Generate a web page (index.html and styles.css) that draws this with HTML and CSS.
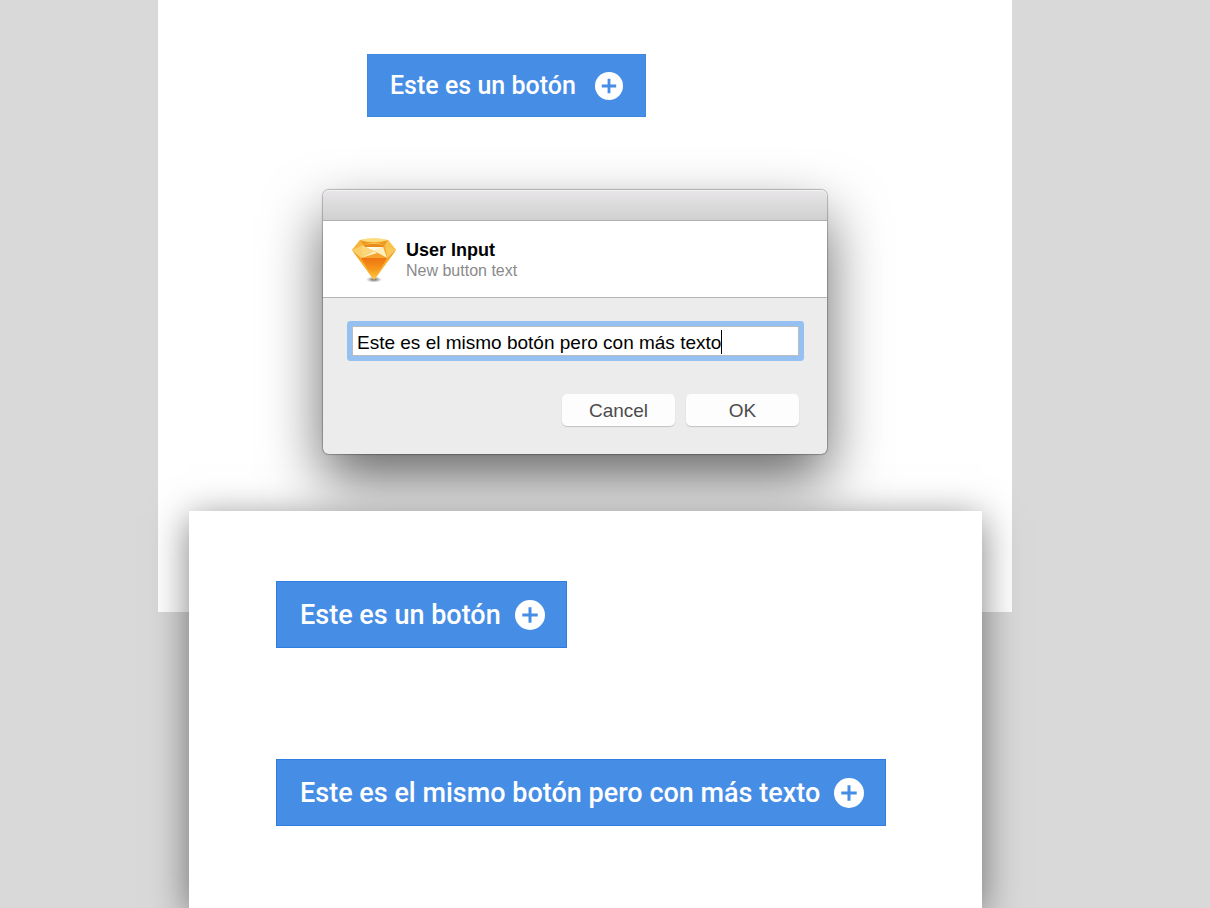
FILE: index.html
```html
<!DOCTYPE html>
<html lang="es">
<head>
<meta charset="utf-8">
<meta name="viewport" content="width=device-width, initial-scale=1">
<title>User Input</title>
<link rel="stylesheet" href="styles.css">
</head>
<body>
<main class="stage">
  <section class="artboard">
    <button class="cta" type="button">
      <span>Este es un botón</span>
      <svg class="cta-icon" viewBox="0 0 28 28" aria-hidden="true"><circle cx="14" cy="14" r="14" fill="#fff"/><path d="M14 6.800v14.400M6.800 14h14.400" stroke="#468de5" stroke-width="2.800"/></svg>
    </button>
    <form class="dialog" role="dialog" aria-labelledby="dialog-title">
      <div class="titlebar"></div>
      <header class="dialog-head">
        <svg class="logo" viewBox="0 0 46 48" aria-hidden="true">
          <defs>
            <linearGradient id="body" x1="0" y1="0" x2="0" y2="1"><stop offset="0" stop-color="#ee7410"/><stop offset=".5" stop-color="#f7961b"/><stop offset="1" stop-color="#fed045"/></linearGradient>
            <linearGradient id="side" x1="0" y1="0" x2="0" y2="1"><stop offset="0" stop-color="#f39a1e"/><stop offset="1" stop-color="#fccb45"/></linearGradient>
            <linearGradient id="top" x1="0" y1="0" x2="0" y2="1"><stop offset="0" stop-color="#fbd76a"/><stop offset=".45" stop-color="#f6a823"/><stop offset="1" stop-color="#f39a1c"/></linearGradient>
            <radialGradient id="ground"><stop offset="0" stop-color="#333" stop-opacity=".8"/><stop offset="1" stop-color="#555" stop-opacity="0"/></radialGradient>
          </defs>
          <ellipse cx="23" cy="42.500" rx="8" ry="3" fill="url(#ground)"/>
          <path d="M9 3Q23 -.5 37 3L45 13L23 43L1 13Z" fill="url(#top)"/>
          <path d="M1 13L10 21L23 43Z" fill="url(#side)"/>
          <path d="M45 13L36 21L23 43Z" fill="url(#side)"/>
          <path d="M10 21H36L23 43Z" fill="url(#body)"/>
          <path d="M1 13L12 8L10 21Z" fill="#fbcf68"/>
          <path d="M45 13L34 8L36 21Z" fill="#f9c65a"/>
          <path d="M1 13L9 3L12 8Z" fill="#f6b540"/>
          <path d="M45 13L37 3L34 8Z" fill="#f8c24d"/>
          <path d="M9 3L12 8Q23 4 34 8L37 3Q23 8 9 3Z" fill="#ee9a20"/>
          <path d="M12 8Q23 6 34 8L32 10H14Z" fill="#e98a18"/>
          <path d="M12 8L14 10L10 21Z" fill="#fbdd8c"/>
          <path d="M34 8L32 10L36 21Z" fill="#f6a830"/>
          <path d="M14 10H32L23 14Z" fill="#fffae5"/>
          <path d="M14 10L23 14L10 21Z" fill="#fbd77c"/>
          <path d="M32 10L23 14L36 21Z" fill="#fff0c0"/>
          <path d="M10 21L23 14L36 21Z" fill="#f7a42e"/>
          <path d="M10 21L23 14L26 16Z" fill="#fff0c4"/>
          <path d="M9 3Q23 -.5 37 3L23 5Z" fill="#fcdc80"/>
        </svg>
        <div>
          <h1 class="dialog-title" id="dialog-title">User Input</h1>
          <label class="dialog-label" for="button-text">New button text</label>
        </div>
      </header>
      <div class="dialog-body">
        <div class="field">
          <input class="field-input" id="button-text" type="text" value="Este es el mismo botón pero con más texto">
          <span class="caret"></span>
        </div>
        <div class="actions">
          <button class="action" type="button">Cancel</button>
          <button class="action" type="submit">OK</button>
        </div>
      </div>
    </form>
  </section>
  <section class="result">
    <button class="cta cta-large" type="button">
      <span>Este es un botón</span>
      <svg class="cta-icon" viewBox="0 0 28 28" aria-hidden="true"><circle cx="14" cy="14" r="14" fill="#fff"/><path d="M14 6.800v14.400M6.800 14h14.400" stroke="#468de5" stroke-width="2.800"/></svg>
    </button>
    <button class="cta cta-large" type="button">
      <span>Este es el mismo botón pero con más texto</span>
      <svg class="cta-icon" viewBox="0 0 28 28" aria-hidden="true"><circle cx="14" cy="14" r="14" fill="#fff"/><path d="M14 6.800v14.400M6.800 14h14.400" stroke="#468de5" stroke-width="2.800"/></svg>
    </button>
  </section>
</main>
</body>
</html>
```
FILE: styles.css
```css
* {
  box-sizing: border-box;
}

body {
  margin: 0;
  background: #d9d9d9;
  font-family: "Liberation Sans", Arial, sans-serif;
}

.stage {
  display: flex;
  flex-direction: column;
  min-height: 100vh;
  padding: 0 198px 0 158px;
  overflow: hidden;
}

.artboard {
  padding: 54px 185px 158px 165px;
  background: #fff;
}

.cta {
  display: flex;
  align-items: center;
  gap: 19px;
  height: 63px;
  padding: 0 22px;
  border: 1px solid #3f87e1;
  background: #468de5;
  color: #fff;
  font: 500 25px/32px Roboto, sans-serif;
  white-space: nowrap;
}

.artboard .cta {
  margin-left: 44px;
}

.cta-icon {
  flex: none;
  width: 28px;
  height: 28px;
}

.cta-large {
  gap: 14px;
  height: 67px;
  padding: 0 21px 0 23px;
  border-color: #2f7de0;
  font-size: 27px;
}

.cta-large .cta-icon {
  width: 30px;
  height: 30px;
}

.dialog {
  margin-top: 73px;
  border-radius: 6px;
  background: #ececec;
  box-shadow: 0 0 1px 1px rgba(0, 0, 0, 0.25), 0 26px 58px rgba(0, 0, 0, 0.6);
}

.titlebar {
  height: 31px;
  border-bottom: 1px solid #b1b1b1;
  border-radius: 6px 6px 0 0;
  background: linear-gradient(#e8e6e8, #d0d0d0);
  box-shadow: inset 0 1px #f2f2f2;
}

.dialog-head {
  display: flex;
  gap: 9px;
  height: 77px;
  padding: 16px 28px;
  border-bottom: 1px solid #b4b4b4;
  background: #fff;
}

.logo {
  width: 46px;
  height: 48px;
}

.dialog-title {
  margin: 3px 0 0;
  color: #000;
  font-size: 18px;
  line-height: 20px;
}

.dialog-label {
  display: block;
  color: #8a8a8a;
  font-size: 16px;
  line-height: 22px;
}

.dialog-body {
  padding: 28px 28px 28px 29px;
}

.field {
  position: relative;
}

.field-input {
  display: block;
  width: 100%;
  height: 30px;
  padding: 4px 4px 0;
  border: 1px solid #b9bdc2;
  outline: 0;
  background: #fff;
  box-shadow: 0 0 0 5px #94c1f1;
  border-radius: 1px;
  color: #000;
  font: 19px/24px "Liberation Sans", Arial, sans-serif;
}

.caret {
  position: absolute;
  top: 4px;
  left: 369px;
  width: 1px;
  height: 24px;
  background: #000;
}

.actions {
  display: flex;
  justify-content: flex-end;
  gap: 11px;
  margin-top: 38px;
}

.action {
  width: 113px;
  height: 32px;
  padding: 1px 0 0;
  border: 0;
  border-radius: 5px;
  background: #fdfdfd;
  box-shadow: 0 1px 1px #c4c4c4;
  color: #4c4c4c;
  font: 19px/24px "Liberation Sans", Arial, sans-serif;
}

.result {
  position: relative;
  display: flex;
  flex: 1;
  flex-direction: column;
  align-items: flex-start;
  gap: 111px;
  margin: -101px 30px 0 31px;
  padding: 70px 87px 82px;
  background: #fff;
  box-shadow: 0 7px 36px rgba(0, 0, 0, 0.5);
}
```
